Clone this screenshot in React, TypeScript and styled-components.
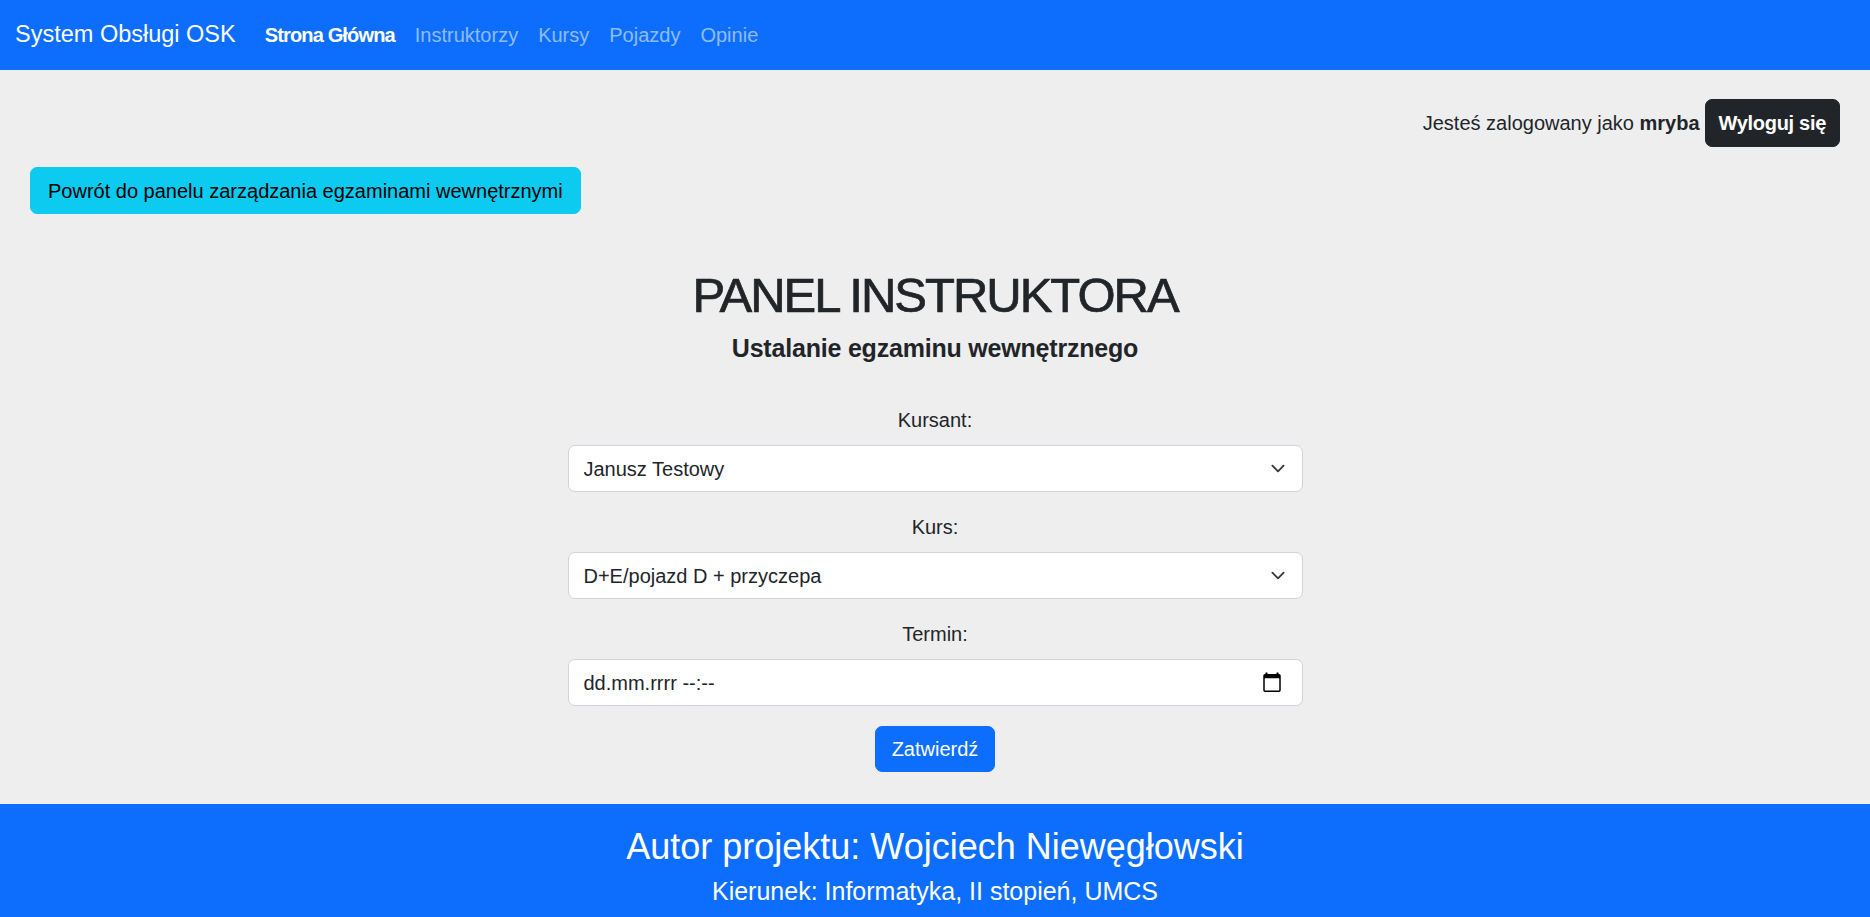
import React from "react";
import styled, { createGlobalStyle } from "styled-components";

const GlobalStyle = createGlobalStyle`
  html, body {
    margin: 0;
    padding: 0;
  }
  body {
    background: #eeeeee;
    color: #212529;
    font-family: "Liberation Sans", Arial, sans-serif;
    font-size: 20px;
    line-height: 1.5;
  }
  * { box-sizing: border-box; }
`;

const Page = styled.div`
  display: flex;
  flex-direction: column;
  min-height: 100vh;
`;

const Navbar = styled.nav`
  height: 70px;
  background: #0d6efd;
  display: flex;
  align-items: center;
  padding: 0 15px;
`;

const Brand = styled.a`
  color: #ffffff;
  font-size: 23.5px;
  line-height: 1.5;
  margin-right: 19px;
  text-decoration: none;
`;

const NavList = styled.div`
  display: flex;
  align-items: center;
`;

const NavLink = styled.a<{ $active?: boolean }>`
  padding: 0 10px;
  font-size: 20px;
  line-height: 1.5;
  text-decoration: none;
  color: ${(p) => (p.$active ? "#ffffff" : "rgba(255, 255, 255, 0.55)")};
  font-weight: ${(p) => (p.$active ? 700 : 400)};
  letter-spacing: ${(p) => (p.$active ? "-0.85px" : "0")};
`;

const Main = styled.main`
  flex: 1;
  padding: 29px 30px 30px;
`;

const UserRow = styled.div`
  display: flex;
  justify-content: flex-end;
  align-items: center;
  gap: 5px;
`;

const UserText = styled.span`
  font-size: 20px;
  line-height: 30px;
`;

const Btn = styled.button<{ $variant: "dark" | "info" | "primary" }>`
  font-family: inherit;
  font-size: 20px;
  line-height: 30px;
  border-radius: 7px;
  cursor: pointer;
  padding: 0 16px;
  border: 1px solid
    ${(p) =>
      p.$variant === "dark" ? "#212529" : p.$variant === "info" ? "#0dcaf0" : "#0d6efd"};
  background: ${(p) =>
    p.$variant === "dark" ? "#212529" : p.$variant === "info" ? "#0dcaf0" : "#0d6efd"};
  color: ${(p) => (p.$variant === "info" ? "#000000" : "#ffffff")};
`;

const LogoutBtn = styled(Btn)`
  height: 48px;
  padding: 0 13px;
  font-weight: 700;
  letter-spacing: -0.3px;
`;

const BackRow = styled.div`
  margin-top: 20px;
  display: flex;
`;

const BackBtn = styled(Btn)`
  height: 47px;
  padding: 0 17px;
`;

const Center = styled.section`
  display: flex;
  flex-direction: column;
  align-items: center;
`;

const Title = styled.h1`
  margin: 52px 0 0;
  font-size: 49px;
  line-height: 58px;
  font-weight: 400;
  letter-spacing: -2px;
  color: #212529;
  -webkit-text-stroke: 0.7px #212529;
`;

const Subtitle = styled.h5`
  margin: 9px 0 0;
  font-size: 25px;
  line-height: 30px;
  font-weight: 700;
  letter-spacing: -0.2px;
  color: #212529;
`;

const Form = styled.form`
  margin-top: 42px;
  width: 735px;
  display: flex;
  flex-direction: column;
  align-items: center;
`;

const Group = styled.div`
  width: 100%;
  margin-bottom: 20px;
  display: flex;
  flex-direction: column;
  align-items: center;
`;

const Label = styled.label`
  font-size: 20px;
  line-height: 30px;
  margin-bottom: 10px;
`;

const Control = styled.div`
  position: relative;
  width: 100%;
  height: 47px;
  background: #ffffff;
  border: 1px solid #ced4da;
  border-radius: 7px;
  display: flex;
  align-items: center;
  padding: 0 50px 0 15px;
  font-size: 20px;
  color: #212529;
`;

const Select = styled.select`
  appearance: none;
  -webkit-appearance: none;
  width: 100%;
  height: 47px;
  background: #ffffff;
  border: 1px solid #ced4da;
  border-radius: 7px;
  padding: 0 50px 0 15px;
  font-family: inherit;
  font-size: 20px;
  color: #212529;
  outline: none;
`;

const SelectWrap = styled.div`
  position: relative;
  width: 100%;
`;

const Chevron = styled.svg`
  position: absolute;
  right: 15px;
  top: 50%;
  margin-top: -7.5px;
  width: 20px;
  height: 15px;
  pointer-events: none;
`;

const CalendarIcon = styled.svg`
  position: absolute;
  right: 21px;
  top: 12px;
  width: 18px;
  height: 20px;
`;

const SubmitBtn = styled(Btn)`
  height: 46px;
  padding: 0 16px;
`;

const Footer = styled.footer`
  background: #0d6efd;
  color: #ffffff;
  text-align: center;
  padding: 21px 0 11px;
`;

const FooterTitle = styled.div`
  font-size: 36px;
  line-height: 43px;
`;

const FooterSub = styled.div`
  margin-top: 8px;
  font-size: 25px;
  line-height: 30px;
`;

const ChevronIcon = () => (
  <Chevron viewBox="0 0 16 16" fill="none">
    <path
      d="m2 5 6 6 6-6"
      stroke="#343a40"
      strokeWidth="2"
      strokeLinecap="round"
      strokeLinejoin="round"
    />
  </Chevron>
);

const SelectField: React.FC<{ value: string }> = ({ value }) => (
  <SelectWrap>
    <Select defaultValue={value}>
      <option value={value}>{value}</option>
    </Select>
    <ChevronIcon />
  </SelectWrap>
);

export default function App() {
  return (
    <Page>
      <GlobalStyle />
      <Navbar>
        <Brand href="#">System Obsługi OSK</Brand>
        <NavList>
          <NavLink href="#" $active>
            Strona Główna
          </NavLink>
          <NavLink href="#">Instruktorzy</NavLink>
          <NavLink href="#">Kursy</NavLink>
          <NavLink href="#">Pojazdy</NavLink>
          <NavLink href="#">Opinie</NavLink>
        </NavList>
      </Navbar>
      <Main>
        <UserRow>
          <UserText>
            Jesteś zalogowany jako <b>mryba</b>
          </UserText>
          <LogoutBtn $variant="dark">Wyloguj się</LogoutBtn>
        </UserRow>
        <BackRow>
          <BackBtn $variant="info">Powrót do panelu zarządzania egzaminami wewnętrznymi</BackBtn>
        </BackRow>
        <Center>
          <Title>PANEL INSTRUKTORA</Title>
          <Subtitle>Ustalanie egzaminu wewnętrznego</Subtitle>
          <Form onSubmit={(e) => e.preventDefault()}>
            <Group>
              <Label>Kursant:</Label>
              <SelectField value="Janusz Testowy" />
            </Group>
            <Group>
              <Label>Kurs:</Label>
              <SelectField value="D+E/pojazd D + przyczepa" />
            </Group>
            <Group>
              <Label>Termin:</Label>
              <Control>
                dd.mm.rrrr --:--
                <CalendarIcon viewBox="0 0 18 20" fill="none">
                  <rect x="2.5" y="0.5" width="2" height="3" fill="#000" />
                  <rect x="13.5" y="0.5" width="2" height="3" fill="#000" />
                  <rect
                    x="1"
                    y="2.75"
                    width="16"
                    height="16.5"
                    rx="1"
                    stroke="#000"
                    strokeWidth="1.5"
                  />
                  <rect x="1" y="2.75" width="16" height="3.5" fill="#000" />
                </CalendarIcon>
              </Control>
            </Group>
            <SubmitBtn $variant="primary" type="submit">
              Zatwierdź
            </SubmitBtn>
          </Form>
        </Center>
      </Main>
      <Footer>
        <FooterTitle>Autor projektu: Wojciech Niewęgłowski</FooterTitle>
        <FooterSub>Kierunek: Informatyka, II stopień, UMCS</FooterSub>
      </Footer>
    </Page>
  );
}
